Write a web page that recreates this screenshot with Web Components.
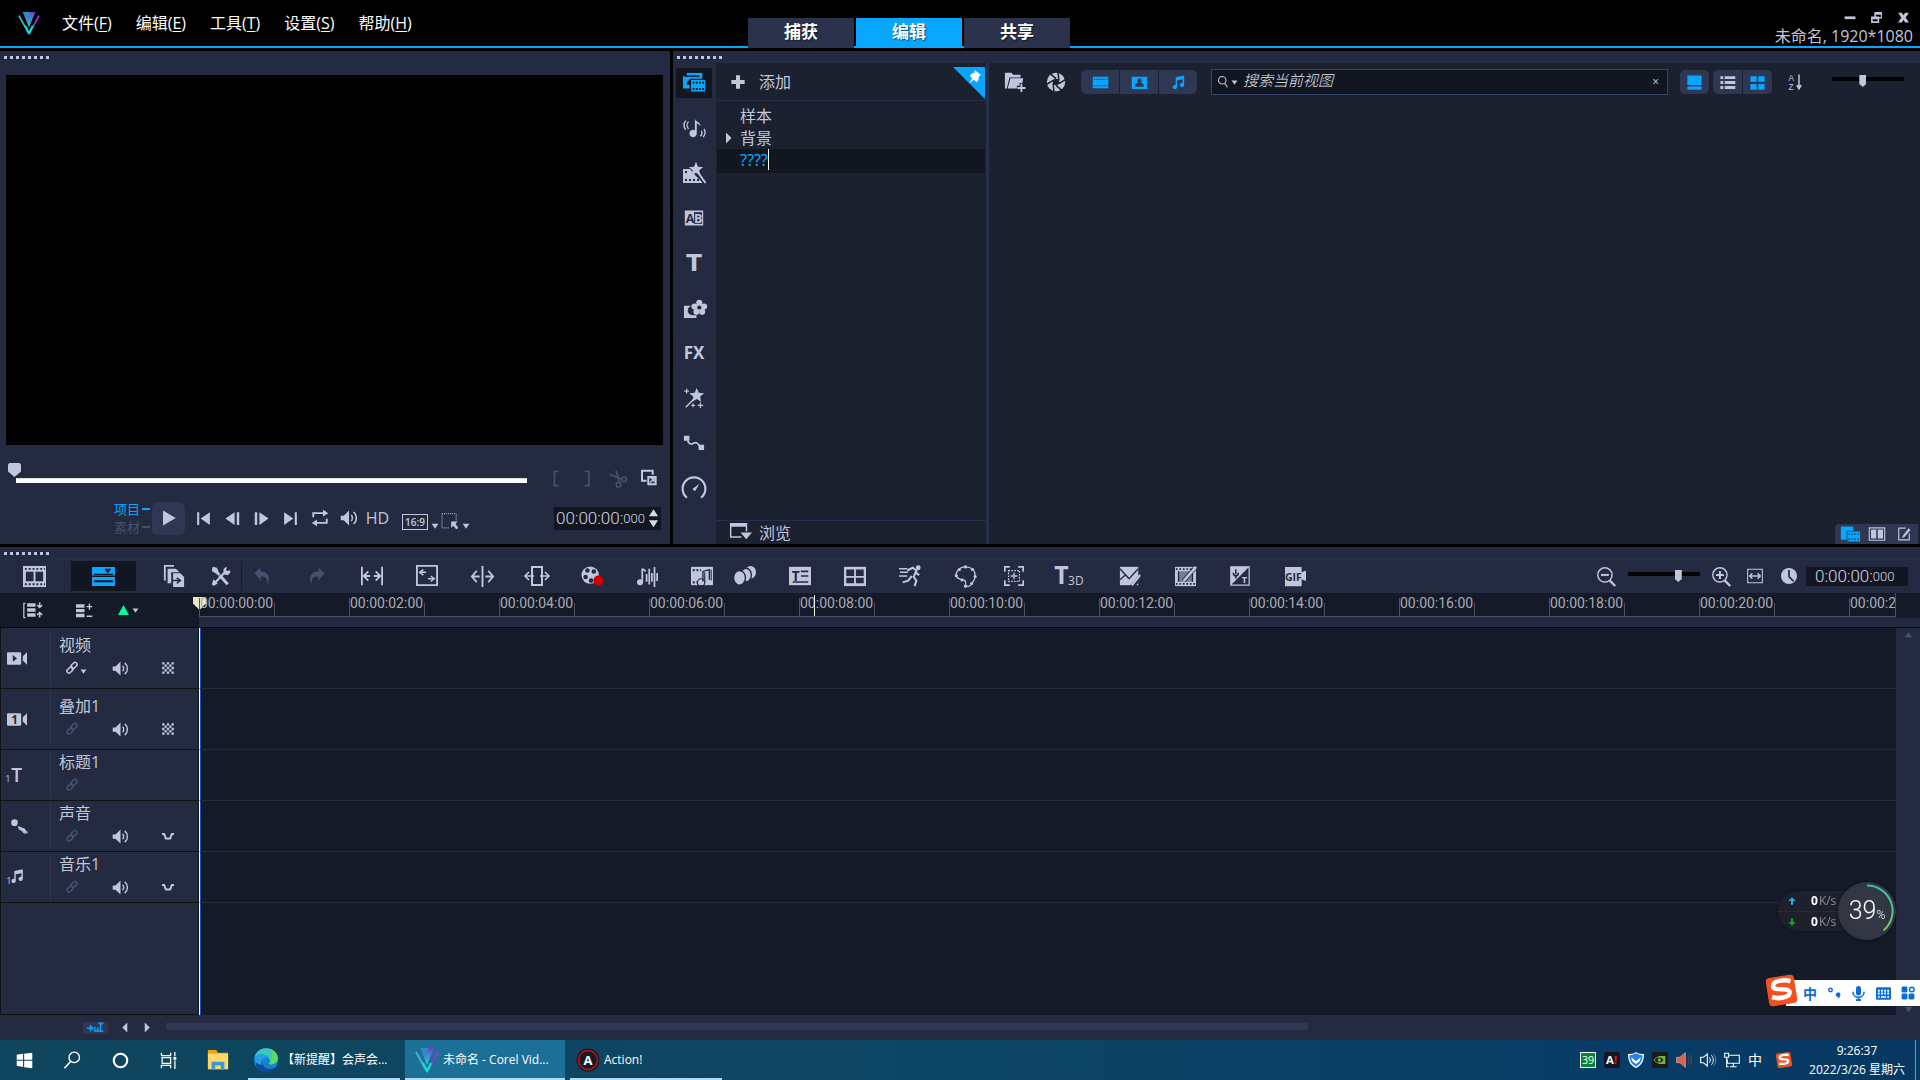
<!DOCTYPE html>
<html lang="zh-CN">
<head>
<meta charset="utf-8">
<title>未命名 - Corel VideoStudio</title>
<style>
  :root {
    --panel: #242b40; --deep: #1c2130; --well: #121621; --lane: #151a28;
    --chip: #2e3853; --ink: #c0c6db; --blue: #08a6ff; --dim: #45516f; --line: #25304f;
  }
  html, body { height: 100%; margin: 0; }
  body {
    background: #000; color: var(--ink); overflow: hidden;
    font: 16px/24px "Open Sans", "Noto Sans CJK SC", sans-serif;
  }
</style>
</head>
<body>
<studio-app></studio-app>
<script>
/* Icon artwork, each on a 24 by 24 grid, drawn in the current colour. */
const TXT = 'font-family="Open Sans, sans-serif" fill="currentColor"';
const STAR = 'M0-8 2.200-2.600 8-2.200 3.600 1.600 5 7.200 0 4.200-5 7.200-3.600 1.600-8-2.200-2.200-2.600z';
const NOTES = 'M8 4.500 20 2v13.500a3 3 0 1 1-2-2.800V7.500L10 9v9.500a3 3 0 1 1-2-2.800z';
const ICONS = {
  logo: `<defs><linearGradient id="a" x1="0" y1="0" x2="0" y2="1"><stop offset="0" stop-color="#c325d8"/><stop offset=".5" stop-color="#7a3fc4"/><stop offset="1" stop-color="#25c9c9"/></linearGradient><linearGradient id="b" x1="0" y1="0" x2="0" y2="1"><stop offset="0" stop-color="#7a3bc9"/><stop offset="1" stop-color="#10e0cf"/></linearGradient></defs>
    <path d="M5 0h14l-7 17z" fill="url(#b)"/><path d="M5 0h8l-1 10z" fill="#2a8fbd"/><path d="M1 4l10.500 19" stroke="#3fb6cf" stroke-width="2" fill="none"/><path d="M23 4 12.500 23" stroke="url(#a)" stroke-width="2" fill="none"/><path d="M8 15l4 8 4-8" stroke="#10dfd2" stroke-width="2" fill="none"/>`,
  min: `<path d="M3 10h20v5H3z"/>`,
  restore: `<path d="M8 2h14v12h-5v8H2V10h6zM11 7v3h6v1h3V7zM5 15v4h9v-4z" fill-rule="evenodd"/>`,
  close: `<path d="M2 3h7l3 5 3-5h7l-6 9 6 9h-7l-3-5-3 5H2l6-9z"/>`,
  media: `<path d="M4 1h17v8H4z"/><path d="M0 4h15v14H0z"/><path d="M1 4.500h17" stroke="#121621" stroke-width="1.500"/><path d="M4 12c2-4 5-4 6-1l-2 3H4z" fill="#121621"/><path d="M8 8h17v14H8z" stroke="#121621" stroke-width="1.500"/><path d="M10.500 11.500h13M10.500 18.500h13" stroke="#121621" stroke-width="2" stroke-dasharray="2 1.500"/>`,
  sound: `<path d="M13 2c1 4 6 3 6 8-2-3-4-3-4-3v11a4 4 0 1 1-2-3.500z"/><path d="M6 5a6 6 0 0 0 0 8M3 4a8 8 0 0 0 0 10M20 15a5 5 0 0 1-1 6M23 13a8 8 0 0 1-1 9" fill="none" stroke="currentColor" stroke-width="1.500"/>`,
  filmwand: `<path d="M1 8h7l5 6 7 7v1H1z"/><path d="M3 10h2v2H3zm0 8h2v2H3zm4 0h2v2H7zm4 0h2v2h-2zm4 0h2v2h-2z" fill="#242b40"/><path d="M15 10l9 11" stroke="#242b40" stroke-width="4"/><path d="M15 10l8.500 12" stroke="currentColor" stroke-width="2"/><g transform="translate(14 8) scale(.9)"><path d="${STAR}"/></g>`,
  ab: `<path d="M1 3h22v18H1z"/><path d="M12 5h9.500v14H12z" fill="#242b40"/><text x="2" y="17.500" font-size="15" font-weight="700" font-family="Open Sans" fill="#242b40">A</text><text x="12" y="17.500" font-size="15" font-weight="700" ${TXT}>B</text>`,
  tee: `<text x="12" y="21" text-anchor="middle" font-size="25" font-weight="700" font-family="DejaVu Sans, sans-serif">T</text>`,
  flower: `<path d="M1 9h8a5 5 0 0 0 2 10h3v3H1z"/><g transform="translate(17 11)"><circle cx="0" cy="-5" r="3.200"/><circle cx="5" cy="-1" r="3.200"/><circle cx="3" cy="4.500" r="3.200"/><circle cx="-3" cy="4.500" r="3.200"/><circle cx="-5" cy="-1" r="3.200"/><circle r="4"/><circle r="2.200" fill="#242b40"/></g>`,
  wand: `<g transform="translate(15 9)"><path d="${STAR}"/></g><path d="M13 12 3 22" stroke="currentColor" stroke-width="1.600"/><path d="M4 2v5M1.500 4.500h5M11 18v4M9 20h4M19 17v6M16 20h6" stroke="currentColor" stroke-width="1.300"/>`,
  path: `<path d="M1 4h6v5.500H1zM17 14h6v5.500h-6z"/><path d="M5 9c2 6 5 4 7 3s5 0 6 4" fill="none" stroke="currentColor" stroke-width="1.800"/>`,
  gauge: `<path d="M5.500 21a10.500 10.500 0 1 1 13 0" fill="none" stroke="currentColor" stroke-width="2"/><path d="M17 8l-4 7-2.500-2z"/>`,
  plus: `<path d="M9 2h6v7h7v6h-7v7H9v-7H2V9h7z"/>`,
  pin: `<path d="M0 0h24v24z" fill="#08a6ff"/><path d="M16 2l5 4-1.500 1-.5 3-1.500 1.500-2-2-3.500 3 2.500-4-2-2L14 5l2.500-1z" fill="#fff"/>`,
  browse: `<path d="M1 2h18v9h-1.500V6h-15v10H13v1.500H1z"/><path d="M12 12h12l-6 7z"/>`,
  folder: `<path d="M1 2h7l2 2h8v3H6L3 19H1z"/><path d="M7 8h14l-1 5h-3v3h-3v3H4z"/><path d="M19 14v9M14.500 18.500h9" stroke="currentColor" stroke-width="2"/>`,
  aperture: `<circle cx="12" cy="12" r="11"/><circle cx="12" cy="12" r="4" fill="#1c2130"/><path d="M12 8 5 2M15.500 10l-1-9M15.500 14l8-5M12 16l7 6M8.500 14l1 9M8.500 10l-8 5" stroke="#1c2130" stroke-width="1.800"/>`,
  film: `<path d="M1 4h22v16H1z"/><path d="M3 7.500h19M3 16.500h19" stroke="#2e3853" stroke-width="1.600" stroke-dasharray="1.500 1.500"/>`,
  photo: `<path d="M1 4h22v17H1z"/><path d="M12 6a3.500 3.500 0 0 1 2 6l4 2.500v3.500H6v-3.500l4-2.500A3.500 3.500 0 0 1 12 6z" fill="#2e3853"/>`,
  notes: `<path d="${NOTES}"/>`,
  mag: `<circle cx="9" cy="9" r="6.500" fill="none" stroke="currentColor" stroke-width="1.800"/><path d="M13 14l5 7" stroke="currentColor" stroke-width="2"/>`,
  big: `<path d="M3 3h18v12H3zM3 17h18v4H3z"/>`,
  list: `<path d="M2 3h4v4H2zm6 0h15v4H8zM2 10h4v4H2zm6 0h15v4H8zM2 17h4v4H2zm6 0h15v4H8z"/>`,
  grid: `<path d="M3 4h8v7H3zm10 0h8v7h-8zM3 14h8v7H3zm10 0h8v7h-8z"/>`,
  sort: `<text x="2" y="10" font-size="11" font-family="Liberation Sans, sans-serif">A</text><text x="2" y="23" font-size="11" font-family="Liberation Sans, sans-serif">Z</text><path d="M16 2v18M13 16l3 5 3-5" fill="none" stroke="currentColor" stroke-width="2"/>`,
  libstack: `<path d="M1 3h15v5H8v11H1z"/><path d="M9 9h15v12H9z"/><path d="M10 12h13M10 18h13" stroke="#2e3853" stroke-width="1.500" stroke-dasharray="2 1.500"/>`,
  dual: `<path d="M1 3h22v18H1zM2.500 4.500v15h19v-15z" fill-rule="evenodd"/><path d="M4 6h7v12H4zM13 6h7v12h-7z"/>`,
  edit: `<path d="M15 2H3v20h18V11" fill="none" stroke="currentColor" stroke-width="2"/><path d="M20 2l3 3L13 17l-4 2 1-4z"/>`,
  lbr: `<path d="M15 2H9v20h6" fill="none" stroke="currentColor" stroke-width="2.500"/>`,
  rbr: `<path d="M8 2h6v20H8" fill="none" stroke="currentColor" stroke-width="2.500"/>`,
  cut: `<path d="M9 2l4 14M1 7l16 6" stroke="currentColor" stroke-width="2.200"/><circle cx="19" cy="13" r="3" fill="none" stroke="currentColor" stroke-width="2"/><circle cx="12" cy="20" r="3" fill="none" stroke="currentColor" stroke-width="2"/>`,
  popout: `<path d="M7 16H0V1h16v6" fill="none" stroke="currentColor" stroke-width="3"/><path d="M8 9h14v14H8zM11 12v8h8v-8z" fill-rule="evenodd"/><path d="M12 19l6-6M13 13h5v5" stroke="currentColor" stroke-width="2" fill="none"/>`,
  play: `<path d="M4 2l17 10L4 22z"/>`,
  home: `<path d="M3 3h3v18H3zM21 3v18L8 12z"/>`,
  back: `<path d="M15 3v18L2 12zM18 3h3.500v18H18z"/>`,
  fwd: `<path d="M9 3v18l13-9zM2.500 3H6v18H2.500z"/>`,
  end: `<path d="M18 3h3v18h-3zM3 3v18l13-9z"/>`,
  loop: `<path d="M3 11V5.500h15M21 13v5.500H6" fill="none" stroke="currentColor" stroke-width="2.500"/><path d="M16 1l7 4.500-7 4.500zM8 14l-7 4.500L8 23z"/>`,
  vol: `<path d="M1 9h4l7-7v20l-7-7H1z"/><path d="M15 8c2 2 2 6 0 8M18 4c5 4 5 12 0 16" fill="none" stroke="currentColor" stroke-width="2"/>`,
  pick: `<path d="M0 1h20v11M0 1v20h10" fill="none" stroke="currentColor" stroke-width="1.400" stroke-dasharray="1.400 1.400"/><path d="M13 12h9l-3 3 4 6-3 2-4-5-3 3z"/>`,
  caret: `<path d="M2 5h20L12 20z"/>`, up: `<path d="M2 20h20L12 5z"/>`,
  left: `<path d="M16 1v22L5 12z"/>`, right: `<path d="M6 1v22l11-11z"/>`,
  peak: `<path d="M0 22h24L12 0z"/>`,
  story: `<path d="M0 1h24v22H0z"/><path d="M3 7h8v10H3zM13 7h8v10h-8z" fill="#242b40"/><path d="M2 4h21M2 20h21" stroke="#242b40" stroke-width="2" stroke-dasharray="2 2"/>`,
  tline: `<path d="M0 2h24v9H0zM0 12.500h24V22H0z"/><path d="M2 16h20v2H2zM2 9h20v1.500H2zM13 4h7l-3.500 5z" fill="#121621"/>`,
  copy: `<path d="M2 17V1h10" fill="none" stroke="currentColor" stroke-width="2"/><path d="M5 4h9l4 4H9v12H5z"/><path d="M11 9h8l4 4v11H11z"/><path d="M10 17h8m-3-3 4 3-4 3" stroke="#242b40" stroke-width="1.600" fill="none"/>`,
  tools: `<path d="M5 5l15 17" stroke="currentColor" stroke-width="3.500"/><path d="M18 6 4 21" stroke="currentColor" stroke-width="2.500"/><path d="M2 1l5 1 2 4-3 3-5-3zM15 4l3-3 1 1-1 3 2 1 3-1v3l-3 3-5-1z"/><path d="M3 16l5 5-5 3-2-2z"/><path d="M9 12l5-5" stroke="#242b40"/>`,
  undo: `<path d="M2 8l8-7v5c10 0 14 8 9 17 1-8-3-11-9-10v5z"/>`,
  redo: `<path d="M22 8l-8-7v5C4 6 0 14 5 23c-1-8 3-11 9-10v5z"/>`,
  fitw: `<path d="M1 2v20M23 2v20" stroke="currentColor" stroke-width="2"/><path d="M3 12h7M21 12h-7M8 7l-5 5 5 5M16 7l5 5-5 5" fill="none" stroke="currentColor" stroke-width="2"/>`,
  scale: `<path d="M1 1h22v21H1z" fill="none" stroke="currentColor" stroke-width="2"/><path d="M8 5 4 8l4 3M4 8h7M16 12l4 3-4 3M20 15h-7" fill="none" stroke="currentColor" stroke-width="1.600"/>`,
  split: `<path d="M12 1v22" stroke="currentColor" stroke-width="2"/><path d="M6 6l-5 6 5 6M1 12h8M18 6l5 6-5 6M23 12h-8" fill="none" stroke="currentColor" stroke-width="2"/>`,
  slip: `<path d="M7 3h10v18H7z" fill="none" stroke="currentColor" stroke-width="2"/><path d="M4 8l-4 4 4 4M0 12h9M20 8l4 4-4 4M24 12h-9" fill="none" stroke="currentColor" stroke-width="1.600"/>`,
  reel: `<circle cx="10" cy="11" r="9.500"/><g fill="#242b40"><circle cx="7" cy="6" r="2.500"/><circle cx="14" cy="7" r="2.500"/><circle cx="5" cy="13" r="2.500"/><circle cx="11" cy="17" r="2.500"/></g><circle cx="19" cy="17" r="5.500" fill="#d00000"/>`,
  mix: `<path d="M6 3v15M6 3l4 3" stroke="currentColor" stroke-width="2" fill="none"/><circle cx="3.500" cy="18.500" r="3.500"/><path d="M11 9v9M14 3v18M17 8v10M20 1v23M23 8v9" stroke="currentColor" stroke-width="2"/>`,
  autom: `<path d="M0 2h24v20H0z"/><path d="M2 5.500h9M2 19h5" stroke="#242b40" stroke-width="2.400" stroke-dasharray="2 2"/><path d="M13 18V7l7-2v11" fill="none" stroke="#242b40" stroke-width="1.500"/><path d="M15 8v11M22 5v12" stroke="#242b40" stroke-width="1.200"/><circle cx="11" cy="19" r="4" fill="none" stroke="#242b40" stroke-width="1.300"/>`,
  trail: `<ellipse cx="18" cy="8" rx="6" ry="7"/><g stroke="#242b40" stroke-width="1.500"><ellipse cx="13" cy="11" rx="6" ry="7.500"/><ellipse cx="6" cy="14" rx="6.500" ry="8"/></g>`,
  sub: `<path d="M0 2h24v20H0z"/><text x="3" y="17" font-size="15" font-weight="700" font-family="Open Sans" fill="#242b40">T</text><path d="M13 7h8M13 12h8M4 18.500h17" stroke="#242b40" stroke-width="1.800"/>`,
  quad: `<path d="M0 2h24v21H0z"/><path d="M2.500 5H11v7H2.500zM13 5h8.500v7H13zM2.500 14H11v6H2.500zM13 14h8.500v6H13z" fill="#242b40"/>`,
  run: `<circle cx="21" cy="3" r="2.600"/><path d="M9 6l6-3 4 3-3 7 3 4-2 6M14 12l-4 5-6 2M18 8l4 3" fill="none" stroke="currentColor" stroke-width="2.200"/><path d="M0 4h9M1 8h9M0 12h9" stroke="currentColor" stroke-width="1.600"/>`,
  mask: `<path d="M12 1c7 0 11 4 11 10 0 6-3 6-4 10-3 3-4 3-7 1 1-5-1-7-6-7-4-1-6-4-4-8 2-4 5-6 10-6z" fill="none" stroke="currentColor" stroke-width="1.500"/><g><circle cx="12" cy="1" r="1.800"/><circle cx="5" cy="4" r="1.800"/><circle cx="1.500" cy="11" r="1.800"/><circle cx="20" cy="4" r="1.800"/><circle cx="23" cy="12" r="1.800"/><circle cx="19" cy="20" r="1.800"/><circle cx="12" cy="23" r="1.800"/><circle cx="8" cy="16" r="1.800"/></g>`,
  track: `<path d="M1 7V1h6M17 1h6v6M23 17v6h-6M7 23H1v-6" fill="none" stroke="currentColor" stroke-width="2"/><path d="M5.500 5.500h13v13h-13z" fill="none" stroke="currentColor" stroke-width="1.500" stroke-dasharray="2 1.400"/><path d="M12 8v8M8 12h8" stroke="currentColor" stroke-width="1.600"/>`,
  t3d: `<text x="-4" y="21" font-size="27" font-weight="700" ${TXT}>T</text><text x="11" y="22" font-size="13" ${TXT}>3D</text>`,
  maskbox: `<path d="M1 2h20v20H1z"/><path d="M1 4l10 11L21 4M1 16l6-5" stroke="#242b40" stroke-width="1.500" fill="none"/><path d="M24 12 14 24" stroke="#242b40" stroke-width="5"/><path d="M23 11 14 22" stroke="currentColor" stroke-width="2.500"/>`,
  filmpen: `<path d="M0 1h24v22H0z"/><path d="M4 6h16v12H4z" fill="#747b92"/><path d="M1 3.500h22M1 20.500h22" stroke="#242b40" stroke-width="2" stroke-dasharray="2 2"/><path d="M4 6v12M20 8v10" stroke="#242b40" stroke-width="1.500"/><path d="M22 3 10 17" stroke="#242b40" stroke-width="5"/><path d="M24 1 10 17" stroke="currentColor" stroke-width="3"/>`,
  speech: `<path d="M1 1h22v22H1z" fill="none" stroke="currentColor" stroke-width="1.500"/><path d="M1 1h22L1 23z"/><path d="M7 4v6M4 8c0 5 6 5 6 0M7 12v3" stroke="#242b40" stroke-width="1.800" fill="none"/><text x="14" y="20" font-size="11" font-weight="700" ${TXT}>T</text>`,
  gif: `<path d="M0 1h19v6l5-2v12l-5-2v8H0z"/><text x="0" y="17" font-size="12" font-weight="700" font-family="Open Sans" fill="#242b40">GIF</text>`,
  zout: `<circle cx="10" cy="10" r="9" fill="none" stroke="currentColor" stroke-width="1.800"/><path d="M16 17l7 7" stroke="currentColor" stroke-width="3"/><path d="M5 10h10" stroke="currentColor" stroke-width="2.500"/>`,
  zin: `<circle cx="10" cy="10" r="9" fill="none" stroke="currentColor" stroke-width="1.800"/><path d="M16 17l7 7" stroke="currentColor" stroke-width="3"/><path d="M5 10h10M10 5v10" stroke="currentColor" stroke-width="2.500"/>`,
  fit: `<path d="M1 2h22v20H1z" fill="none" stroke="currentColor" stroke-width="1.600"/><path d="M8 8l-4 4 4 4M16 8l4 4-4 4M4 12h16" fill="none" stroke="currentColor" stroke-width="2"/>`,
  clock: `<circle cx="12" cy="12" r="12"/><path d="M12 3v10l7 7" stroke="#242b40" stroke-width="2.500" fill="none"/>`,
  tracks: `<path d="M3 4H1v17h2" fill="none" stroke="currentColor" stroke-width="1.500"/><path d="M5 4h10v4H5zm0 6h10v4H5zM5 16h10v4H5z"/><path d="M20 3v6M20 15v6M17 6l3 3 3-3M17 18l3-3 3 3" stroke="currentColor" stroke-width="1.800" fill="none"/>`,
  addtrk: `<path d="M0 3h12v5H0zm0 7h12v4.500H0zM0 16.500h12v5H0z"/><path d="M19 2v9M15 6.500h8M15 20h8" stroke="currentColor" stroke-width="2"/>`,
  cam: `<rect y="5" width="17" height="15" rx="1"/><path d="M19 10l5-5v15l-5-5z"/><path d="M7 8.500l5 4-5 4z" fill="#242b40"/>`,
  cam1: `<rect y="5" width="17" height="15" rx="1"/><path d="M19 10l5-5v15l-5-5z"/><text x="5" y="17.500" font-size="14" font-weight="700" font-family="Open Sans" fill="#242b40">1</text>`,
  title1: `<text x="-2" y="20" font-size="11" ${TXT}>1</text><text x="5" y="20" font-size="23" font-weight="600" ${TXT}>T</text>`,
  mic: `<circle cx="9" cy="8" r="4"/><path d="M13 12l8 3 3 4-3 1-7-4z"/><path d="M19 19c3 3 5 1 6 0" stroke="currentColor" stroke-width="1.300" fill="none"/>`,
  music1: `<text x="-1" y="20" font-size="11" ${TXT}>1</text><g transform="translate(2 1) scale(.85)"><path d="${NOTES}"/></g>`,
  link: `<g fill="none" stroke="currentColor" stroke-width="3"><rect x="9" y="3" width="14" height="8" rx="4" transform="rotate(-45 16 7)"/><rect x="1" y="12" width="14" height="8" rx="4" transform="rotate(-45 8 16)"/></g>`,
  mesh: `<path d="M2 2h4v4H2zm8 0h4v4h-4zm8 0h4v4h-4zM6 6h4v4H6zm8 0h4v4h-4zM2 10h4v4H2zm8 0h4v4h-4zm8 0h4v4h-4zM6 14h4v4H6zm8 0h4v4h-4zM2 18h4v4H2zm8 0h4v4h-4zm8 0h4v4h-4z"/>`,
  duck: `<path d="M0 8h4.500l3 9h9l3-9H24" fill="none" stroke="currentColor" stroke-width="4" stroke-linejoin="round"/>`,
  follow: `<path d="M0 13h7M4 9l4 4-4 4M10 17h13M11 17v-6M15 17v-5M19 17V9" fill="none" stroke="currentColor" stroke-width="2"/><path d="M15 5h9l-4.500 5z"/>`,
  win: `<path d="M1 4l9-1.500V11H1zM11.500 2.500 23 1v10H11.500zM1 12.500h9V21l-9-1.500zM11.500 12.500H23V23l-11.500-1.500z"/>`,
  find: `<circle cx="15" cy="8.500" r="7" fill="none" stroke="currentColor" stroke-width="1.800"/><path d="M10 14l-8 9" stroke="currentColor" stroke-width="2"/>`,
  ring: `<circle cx="12" cy="12" r="9.500" fill="none" stroke="currentColor" stroke-width="3"/>`,
  tview: `<path d="M2 1v4h13V1M3 8h12v8H3zM2 23v-4h13v4M21 0v6M21 12v12" fill="none" stroke="currentColor" stroke-width="1.800"/><path d="M19 7h4v4h-4z"/>`,
  explorer: `<path d="M1 1h9l2 3h11v18H1z" fill="#f0a30c"/><path d="M1 5h22v17H1z" fill="#ffd869"/><path d="M5 23v-9h14v9h-4v-5H9v5z" fill="#3b97dc"/>`,
  edge: `<circle cx="12" cy="12" r="12" fill="#1583d2"/><path d="M1 8C4-2 20-3 24 9c1 6-5 8-9 7 3-4-1-8-6-8-4 0-7 2-8 4z" fill="#39c8ba"/><path d="M17 1c6 3 8 8 6 12-2 3-6 4-8 3 3-6 4-9 2-15z" fill="#61d768"/><path d="M8 12c0 9 8 11 14 7-5 8-17 7-20-1 0-4 3-6 6-6z" fill="#0c4b9c"/><path d="M1 9c3-4 11-4 14 1-4-2-9 1-7 7-5-1-8-4-7-8z" fill="#249ee2"/>`,
  action: `<circle cx="12" cy="12" r="11.500" fill="#191a21"/><circle cx="12" cy="12" r="9.500" fill="none" stroke="#c50c26" stroke-width="1.500"/><text x="12" y="16.500" text-anchor="middle" font-size="13" font-weight="700" font-family="Open Sans, sans-serif" fill="#fff">A</text>`,
  t39: `<path d="M.75.75h22.500v22.500H.75z" fill="#07833a" stroke="#fff" stroke-width="1.500"/><text x="12" y="18" text-anchor="middle" font-size="16" font-family="Open Sans" fill="#fff">39</text>`,
  tact: `<rect width="24" height="24" rx="4" fill="#15161d"/><text x="3" y="18" font-size="17" font-weight="700" font-family="Open Sans, sans-serif" fill="#fff">A<tspan fill="#f01026">!</tspan></text>`,
  shield: `<path d="M12 0c4 3 8 3 12 3 0 10-3 17-12 21C3 20 0 13 0 3c4 0 8 0 12-3z" fill="#fff"/><path d="M12 2c4 2 7 3 10 3 0 8-3 13-10 17C5 18 2 13 2 5c3 0 6-1 10-3z" fill="#2582ed"/><path d="M5 8l7 6 7-6-1 5-6 5-6-5z" fill="#fff"/>`,
  nv: `<path d="M0 0h24v24H0z" fill="#1b1b1b"/><path d="M10 6h10v12H10z" fill="#75b43e"/><path d="M3 12c4-6 11-6 15 0-4 6-11 6-15 0z" fill="#1b1b1b" stroke="#75b43e" stroke-width="1.500"/><circle cx="11" cy="12" r="2.500" fill="#75b43e"/>`,
  redvol: `<path d="M1 8h5l8-7v22l-8-7H1z" fill="#dc6045" stroke="#efb79f"/><path d="M18 7c2 3 2 7 0 10M21 4c3 5 3 11 0 16" fill="none" stroke="#4a4348" stroke-width="2"/>`,
  tvol: `<path d="M1 8h4l6-5v18l-6-5H1z" fill="none" stroke="#fff" stroke-width="1.600"/><path d="M14 8c2 2 2 6 0 8M17 5c4 4 4 10 0 14" fill="none" stroke="#fff" stroke-width="1.500"/><path d="M20 3c5 5 5 13 0 18" fill="none" stroke="#6f8fae" stroke-width="1.500"/>`,
  net: `<path d="M8 5h15v12H5v-6M14 17v5M9 22h10M1 2h6v6H1zM4 8v14h3" fill="none" stroke="#fff" stroke-width="1.600"/>`,
  sogou: `<g transform="rotate(-9 12 12)"><rect x="1" y="1" width="22" height="22" rx="3" fill="#f4501e"/><path d="M20 6c-4-2-14-3-14 2 0 4 12 2 12 6 0 5-10 4-14 2" fill="none" stroke="#fff" stroke-width="3.500"/></g>`,
  punct: `<circle cx="6" cy="7" r="3" fill="none" stroke="currentColor" stroke-width="2.500"/><path d="M17 12a3.500 3.500 0 0 1 6 2c0 5-3 7-6 8 2-2 2-3 2-4a3 3 0 0 1-2-6z"/>`,
  bmic: `<rect x="8" y="0" width="8" height="15" rx="4"/><path d="M3 9c0 12 18 12 18 0M12 18v5" fill="none" stroke="currentColor" stroke-width="2.500"/><path d="M8 21h8v3H8z"/>`,
  kbd: `<rect y="2" width="24" height="20" rx="2"/><path d="M3 7.500h18M3 12h18" stroke="#fff" stroke-width="3" stroke-dasharray="3 2"/><path d="M3 17.500h3M8 17.500h8M18 17.500h3" stroke="#fff" stroke-width="2.500"/>`,
  apps: `<rect x="1" y="1" width="10" height="10" rx="2"/><circle cx="18.500" cy="6" r="4" fill="none" stroke="currentColor" stroke-width="2.500"/><rect x="1" y="13" width="10" height="10" rx="2"/><rect x="13" y="13" width="10" height="10" rx="2"/>`,
  uparr: `<path d="M12 1l11 11h-8v11H9V12H1z"/>`, dnarr: `<path d="M12 23l11-11h-8V1H9v11H1z"/>`
};

const BASE = `
  *, *::before, *::after { box-sizing: border-box; }
  :host { display: block; }
  button, input { font: inherit; color: inherit; background: none; border: 0; padding: 0; margin: 0; outline: 0; }
  button { display: inline-flex; align-items: center; justify-content: center; }
  input { min-width: 0; }
  input[type=range] { appearance: none; -webkit-appearance: none; display: block; }
  .slim { height: 12px; width: 72px; background: linear-gradient(#000, #000) 0 2px / 100% 4px no-repeat; }
  .slim::-webkit-slider-thumb { -webkit-appearance: none; width: 7px; height: 12px; background: var(--ink); clip-path: polygon(0 0,100% 0,100% 75%,50% 100%,0 75%); }
`;
const define = (name, css, html) => customElements.define(name, class extends HTMLElement {
  constructor() {
    super();
    const t = document.createElement('template');
    t.innerHTML = `<style>${BASE}${css}</style>${typeof html === 'function' ? html(this) : html}`;
    this.attachShadow({ mode: 'open' }).append(t.content.cloneNode(true));
  }
});
const ic = (name, size = 20) => `<vs-icon name="${name}" style="--s:${size}px"></vs-icon>`;
const btn = (name, label, size, cls = '') => `<button type="button" class="${cls}" aria-label="${label}">${ic(name, size)}</button>`;

class VsIcon extends HTMLElement {
  connectedCallback() {
    if (this.shadowRoot) return;
    this.attachShadow({ mode: 'open' }).innerHTML =
      `<style>:host{display:inline-block;flex:none;width:var(--s);height:var(--s)}svg{display:block;overflow:visible;width:100%;height:100%}</style>
       <svg viewBox="0 0 24 24" fill="currentColor" aria-hidden="true">${ICONS[this.getAttribute('name')]}</svg>`;
  }
}
customElements.define('vs-icon', VsIcon);

define('drag-grip', `
  :host { height: 12px; padding: 5px 0 0 4px; }
  i { display: block; width: 46px; height: 3px; background: repeating-linear-gradient(90deg, var(--ink) 0 3px, transparent 3px 6px); }
`, '<i></i>');

/* Title bar: logo, menus, workspace tabs, window buttons. */
define('title-bar', `
  :host { display: grid; grid-template-columns: minmax(0, 748fr) auto minmax(0, 850fr); height: 48px; border-bottom: 2px solid var(--blue); background: #000; }
  nav { display: flex; align-items: center; padding: 0 0 2px 18px; color: #fff; }
  nav button { margin-left: 24px; white-space: nowrap; }
  nav vs-icon + button { margin-left: 22px; }
  u { text-underline-offset: 2px; }
  .tabs { display: flex; gap: 2px; align-items: flex-end; }
  .tabs button { width: 106px; height: 30px; padding-bottom: 2px; background: #2a334b; color: #fff; font-weight: 700; font-size: 17px; text-shadow: 1px 1px 1px #0008; }
  .tabs .on { background: var(--blue); }
  .right { display: flex; flex-direction: column; align-items: flex-end; padding: 10px 7px 0 0; }
  .win { display: flex; gap: 14px; padding-right: 3px; height: 14px; }
  .right p { margin: 0; line-height: 24px; }
`, `<nav>${ic('logo', 22)}
  ${[['文件', 'F'], ['编辑', 'E'], ['工具', 'T'], ['设置', 'S'], ['帮助', 'H']].map(([a, k]) => `<button type="button"><span>${a}(<u>${k}</u>)</span></button>`).join('')}
  </nav>
  <div class="tabs"><button type="button">捕获</button><button type="button" class="on">编辑</button><button type="button">共享</button></div>
  <div class="right"><div class="win">${btn('min', '最小化', 13)}${btn('restore', '还原', 13)}${btn('close', '关闭', 13)}</div><p>未命名, 1920*1080</p></div>`);

define('time-code', `
  :host { display: flex; align-items: center; background: var(--well); font: 300 17px/18px Roboto, sans-serif; color: #d5d9e6; }
  small { font-size: 13px; padding-top: 2px; }
`, '<span><slot></slot></span><small><slot name="ms"></slot></small><slot name="spin"></slot>');

/* Preview player. */
define('preview-panel', `
  :host { display: flex; flex-direction: column; background: var(--panel); }
  .video { flex: 1; margin: 12px 7px 0 6px; background: #000; }
  .scrub { display: flex; align-items: center; padding: 14px 5px 0 8px; height: 42px; }
  .scrub input { flex: 1; height: 20px; margin-right: 14px; background: linear-gradient(#ddd 0 1px, #fff 1px) 8px 100% / 100% 5px no-repeat; }
  .scrub input::-webkit-slider-thumb { -webkit-appearance: none; width: 13px; height: 14px; margin-bottom: 6px; background: var(--ink); clip-path: polygon(0 10%,10% 0,90% 0,100% 10%,100% 60%,50% 100%,0 60%); }
  .scrub button { width: 31px; color: var(--dim); margin-top: 10px; }
  .scrub button:last-child { color: var(--ink); }
  .bar { display: flex; align-items: center; height: 57px; padding: 10px 9px 5px 114px; }
  .mode { display: flex; flex-direction: column; width: 38px; font-size: 13px; padding-bottom: 1px; }
  .mode button { height: 18px; line-height: 18px; justify-content: flex-start; color: var(--dim); }
  .mode button::after { content: ""; width: 8px; height: 2px; margin-left: 2px; background: currentColor; }
  .mode .on { color: var(--blue); }
  .play { width: 33px; height: 33px; border-radius: 6px; background: var(--chip); margin-right: 4px; }
  .t { width: 29px; }
  .drops { display: flex; align-items: flex-end; gap: 3px; padding: 6px 0 0 10px; }
  .ratio { border: 1px solid var(--ink); width: 26px; height: 16px; font-size: 10px; line-height: 14px; font-weight: 600; }
  time-code { margin-left: auto; height: 23px; padding-left: 2px; width: 107px; }
  .spin { margin-left: auto; display: flex; flex-direction: column; padding-right: 2px; }
`, `<drag-grip></drag-grip><div class="video"></div>
  <div class="scrub"><input type="range" value="0" aria-label="预览位置">${btn('lbr', '开始标记', 17)}${btn('rbr', '结束标记', 17)}${btn('cut', '分割', 19)}${btn('popout', '扩大', 16)}</div>
  <div class="bar"><div class="mode"><button type="button" class="on">项目</button><button type="button">素材</button></div>
  ${btn('play', '播放', 18, 'play')}${btn('home', '起始', 17, 't')}${btn('back', '上一帧', 17, 't')}${btn('fwd', '下一帧', 17, 't')}${btn('end', '结束', 17, 't')}${btn('loop', '重复', 18, 't')}${btn('vol', '音量', 18, 't')}<button type="button" class="t">HD</button>
  <div class="drops"><button type="button" class="ratio">16:9</button>${ic('caret', 8)}${btn('pick', '变形工具', 17)}${ic('caret', 8)}</div>
  <time-code>00:00:00:<span slot="ms">000</span><span slot="spin" class="spin">${ic('up', 11)}${ic('caret', 11)}</span></time-code></div>`);

/* Library: category rail, folder tree, gallery. */
define('library-panel', `
  :host { display: flex; flex-direction: column; background: var(--panel); min-width: 0; }
  .body { flex: 1; display: flex; min-height: 0; }
  .rail { width: 43px; padding: 5px 0 0 3px; display: flex; flex-direction: column; gap: 15px; }
  .rail button { width: 36px; height: 30px; }
  .rail .on { background: var(--well); color: var(--blue); }
  .rail .fx { font: 700 17px/30px "Liberation Sans Narrow", "Noto Sans", sans-serif; }
  .tree { width: 270px; background: var(--deep); display: flex; flex-direction: column; }
  .add { height: 38px; display: flex; align-items: center; padding-left: 14px; border-bottom: 1px solid var(--line); }
  .add > button { gap: 13px; }
  .add .pin { margin: 0 1px 0 auto; align-self: flex-start; padding-top: 4px; }
  ul { list-style: none; margin: 4px 1px 0; padding: 0; flex: 1; }
  li { height: 22px; display: flex; align-items: center; padding-left: 23px; }
  li.fold { padding-left: 6px; gap: 5px; }
  li.sel { height: 24px; background: var(--well); color: var(--blue); font: 16px/20px "Noto Sans", sans-serif; }
  li input { width: 28px; height: 21px; padding-bottom: 2px; }
  li.sel i { width: 1px; height: 21px; background: #fff; align-self: flex-start; }
  .browse { height: 24px; border-top: 1px solid var(--line); padding: 0 0 0 13px; }
  .browse button { gap: 7px; height: 23px; }
  .main { flex: 1; min-width: 0; display: flex; flex-direction: column; border-left: 3px solid var(--line); background: var(--deep); justify-content: space-between; }
  .tools { display: flex; align-items: flex-start; padding: 6px 16px 0 15px; height: 40px; }
  .tools > button { height: 26px; }
  .ap { margin: 0 15px 0 20px; }
  .grp { display: flex; gap: 1px; border-radius: 5px; overflow: hidden; margin-top: 1px; }
  .grp button { background: var(--chip); height: 24px; width: 38px; color: var(--blue); }
  .view button { width: 29px; }
  .view + .view { margin-left: 4px; }
  .view .off { color: var(--ink); }
  .find { flex: 1; display: flex; align-items: center; height: 26px; border: 1px solid #36436b; background: var(--well); margin: 0 12px 0 14px; padding: 0 8px 0 5px; }
  .find input { flex: 1; height: 24px; margin-left: 5px; padding-bottom: 4px; font-style: italic; font-weight: 300; font-size: 15px; }
  .find input::placeholder { color: #e4e7f0; opacity: 1; }
  .find button { font-size: 12px; }
  .sort { margin: 0 27px 0 15px; }
  .tools .slim { margin-top: 6px; }
  .corner { align-self: flex-end; display: flex; gap: 6px; height: 20px; margin-right: 2px; padding: 0 4px; background: var(--chip); border-radius: 4px 0 0 0; }
  .corner button { width: 21px; }
  .corner .on { color: var(--blue); }
`, `<drag-grip></drag-grip><div class="body">
  <nav class="rail">${btn('media', '媒体', 22, 'on')}${btn('sound', '声音', 22)}${btn('filmwand', '模板', 24)}${btn('ab', '转场', 20)}${btn('tee', '标题', 22)}${btn('flower', '覆叠', 23)}<button type="button" class="fx">FX</button>${btn('wand', '滤镜', 22)}${btn('path', '路径', 22)}${btn('gauge', '速度', 26)}</nav>
  <div class="tree"><div class="add"><button type="button">${ic('plus', 16)}<span>添加</span></button><button type="button" class="pin" aria-label="固定">${ic('pin', 32)}</button></div>
    <ul><li>样本</li><li class="fold">${ic('right', 12)}背景</li><li class="sel"><input type="text" value="????" aria-label="文件夹名称"><i></i></li></ul>
    <div class="browse"><button type="button">${ic('browse', 23)}<span>浏览</span></button></div></div>
  <div class="main"><div class="tools">${btn('folder', '导入', 22)}${btn('aperture', '捕获', 20, 'ap')}
    <div class="grp">${btn('film', '视频', 17)}${btn('photo', '图片', 17)}${btn('notes', '音频', 17)}</div>
    <div class="find">${ic('mag', 14)}${ic('caret', 7)}<input type="text" placeholder="搜索当前视图" aria-label="搜索"><button type="button">×</button></div>
    <div class="grp view">${btn('big', '大图', 19)}</div><div class="grp view">${btn('list', '列表', 17, 'off')}${btn('grid', '缩略图', 19)}</div>
    ${btn('sort', '排序', 18, 'sort')}<input type="range" class="slim" value="42" aria-label="缩略图大小"></div>
    <div class="corner">${btn('libstack', '素材库', 20, 'on')}${btn('dual', '双窗口', 18)}${btn('edit', '选项', 14)}</div></div></div>`);

/* Ruler marks are 75px per second; the last section ends at the window edge. */
define('time-ruler', `
  :host { display: flex; height: 24px; overflow: hidden; border-bottom: 1px solid #4b5168; border-right: 1px solid #4b5168; position: relative; color: #a9acb5; font: 14px/16px Roboto, sans-serif; }
  div { flex: 0 0 150px; display: flex; align-items: flex-end; }
  div:last-of-type { flex: 1 1 0; min-width: 0; }
  span, i { width: 75px; border-left: 1px solid #4b5168; white-space: nowrap; }
  div:last-of-type span { width: auto; }
  span { height: 18px; padding-bottom: 2px; line-height: 10px; }
  i { height: 13px; }
  b { position: absolute; left: 615px; top: 2px; width: 1px; height: 22px; background: #f2efdd; }
`, Array.from({ length: 11 }, (_, n) => `<div><span>00:00:${String(n * 2).padStart(2, '0')}:00</span><i></i></div>`).join('') + '<div><span>00:00:2</span></div><b></b>');

/* One timeline track: header and lane. Attributes: icon, tall, link, tools. */
define('timeline-track', `
  :host { display: grid; grid-template-columns: 199px 1fr; height: 51px; }
  :host([tall]) { height: 61px; }
  .head { display: flex; background: var(--panel); border: solid #101216; border-width: 0 1px 1px 1px; }
  .kind { width: 50px; border-right: 1px solid #2e3853; display: flex; align-items: center; padding-left: 6px; margin: 2px 0; }
  .info { padding: 0 0 0 8px; }
  :host([tall]) .info { padding-top: 5px; }
  .row { display: flex; height: 22px; align-items: center; }
  .row button { width: 29px; margin-right: 18px; }
  .row button:first-child { width: 26px; margin-right: 21px; padding-left: 7px; justify-content: flex-start; }
  .row .off { color: var(--dim); }
  .row button + button + button { margin: 0; }
  .row button:first-child vs-icon + vs-icon { margin: 6px 0 0 2px; }
  .lane { background: var(--lane); border-left: 1px solid #fffdf0; border-bottom: 1px solid var(--panel); box-shadow: inset 1px 0 #1d4fc4; }
`, el => {
  const link = el.getAttribute('link') === 'on';
  const third = el.getAttribute('tools');
  return `<div class="head"><div class="kind">${ic(el.getAttribute('icon'), 20)}</div><div class="info"><slot></slot>
    <div class="row"><button type="button" aria-label="链接" class="${link ? '' : 'off'}">${ic('link', 12)}${link ? ic('caret', 7) : ''}</button>
    ${third ? btn('vol', '静音', 17) + btn(third, '选项', third === 'mesh' ? 14 : 12) : ''}</div></div></div><div class="lane"></div>`;
});

define('timeline-panel', `
  :host { display: flex; flex-direction: column; background: var(--panel); min-width: 0; min-height: 0; }
  .bar { display: flex; align-items: flex-start; height: 34px; border-top: 1px solid var(--line); padding: 1px 12px 0 0; }
  .mode { width: 65px; height: 30px; }
  .mode.first { margin: 0 4px 0 2px; }
  .mode.on { background: var(--well); color: var(--blue); }
  .g { display: flex; gap: 15px; }
  .g button { width: 40px; height: 30px; }
  .a { margin-left: 18px; gap: 7px; padding-right: 2px; }
  .b { margin-left: -2px; border-left: 1px solid #181c28; } .b button:nth-child(-n+2) { color: var(--dim); }
  .c { margin-left: 3px; } .d { margin-left: 9px; } .e { margin-left: 21px; }
  .zoom { margin-left: auto; display: flex; align-items: center; height: 30px; }
  .zoom .slim { margin: 0 12px 0 12px; }
  .zoom button + button { margin-left: 18px; }
  .zoom input + button + button { margin-left: 16px; }
  time-code { height: 19px; width: 102px; margin-left: 9px; padding-left: 9px; }
  .top { display: grid; grid-template-columns: 199px 1fr 24px; height: 35px; background: var(--lane); border-bottom: 1px solid #080a10; }
  .corner { display: flex; align-items: center; padding-left: 23px; }
  .corner button + button { margin-left: 33px; }
  .corner .tri { color: #0f9; margin-left: 25px; margin-right: 3px; }
  .rul { display: flex; flex-direction: column; position: relative; min-width: 0; }
  .rul::after { content: ""; flex: 1; background: var(--panel); }
  .head { position: absolute; left: -6px; top: 4px; width: 13px; height: 13px; background: #ece5c8; clip-path: polygon(0 0,100% 0,100% 50%,50% 100%,0 50%); }
  .gap { background: linear-gradient(var(--lane) 25px, var(--panel) 25px); }
  .body { flex: 1; display: grid; grid-template-columns: 1fr 24px; min-height: 0; }
  .tracks { display: flex; flex-direction: column; }
  .rest { flex: 1; display: grid; grid-template-columns: 199px 1fr; }
  .rest i { background: var(--panel); border: solid #101216; border-width: 0 1px 1px 1px; }
  .rest b { background: var(--lane); border-left: 1px solid #fffdf0; box-shadow: inset 1px 0 #1d4fc4; }
  .vs { display: flex; flex-direction: column; justify-content: space-between; align-items: center; padding: 2px 0 1px; color: var(--dim); }
  .foot { height: 25px; display: flex; align-items: center; padding-left: 83px; }
  .foot .f { width: 25px; height: 12px; border-radius: 3px; background: var(--chip); color: var(--blue); margin-right: 6px; }
  .foot .n { width: 22px; }
  .foot i { flex: 0 1 1142px; height: 7px; background: var(--chip); margin: 0 0 3px 8px; }
`, `<drag-grip></drag-grip>
  <div class="bar">${btn('story', '故事板视图', 23, 'mode first')}${btn('tline', '时间轴视图', 23, 'mode on')}
  <div class="g a">${btn('copy', '复制属性', 22)}${btn('tools', '工具', 20)}</div>
  <div class="g b">${[['undo', 18], ['redo', 18], ['fitw', 22], ['scale', 22], ['split', 23], ['slip', 24], ['reel', 22], ['mix', 21], ['autom', 22]].map(([n, s]) => btn(n, n, s)).join('')}</div>
  <div class="g c">${[['trail', 22], ['sub', 22], ['quad', 22], ['run', 22], ['mask', 21]].map(([n, s]) => btn(n, n, s)).join('')}</div>
  <div class="g d">${btn('track', 'track', 20)}${btn('t3d', '3D', 22)}</div>
  <div class="g e">${[['maskbox', 22], ['filmpen', 21], ['speech', 20], ['gif', 21]].map(([n, s]) => btn(n, n, s)).join('')}</div>
  <div class="zoom">${btn('zout', '缩小', 19)}<input type="range" class="slim" value="72" aria-label="缩放">${btn('zin', '放大', 19)}${btn('fit', '适合窗口', 16)}${btn('clock', '时长', 16)}<time-code>0:00:00:<span slot="ms">000</span></time-code></div></div>
  <div class="top"><div class="corner">${btn('tracks', '显示全部轨道', 20)}${btn('addtrk', '轨道管理器', 17)}<button type="button" class="tri" aria-label="章节">${ic('peak', 11)}</button>${ic('caret', 7)}</div>
    <div class="rul"><i class="head"></i><time-ruler></time-ruler></div><div class="gap"></div></div>
  <div class="body"><div class="tracks">
    <timeline-track tall icon="cam" link="on" tools="mesh">视频</timeline-track>
    <timeline-track tall icon="cam1" tools="mesh">叠加1</timeline-track>
    <timeline-track icon="title1">标题1</timeline-track>
    <timeline-track icon="mic" tools="duck">声音</timeline-track>
    <timeline-track icon="music1" tools="duck">音乐1</timeline-track>
    <div class="rest"><i></i><b></b></div></div>
    <div class="vs">${ic('up', 9)}${ic('caret', 9)}</div></div>
  <div class="foot">${btn('follow', '启用滚动', 17, 'f')}${btn('left', '向左', 11, 'n')}${btn('right', '向右', 11, 'n')}<i></i></div>`);

define('task-bar', `
  :host { display: flex; height: 40px; color: #fff; font-size: 12px; background: linear-gradient(90deg, #0f455c, #0d4664 45%, #083c66 85%, #063861); }
  .q { width: 48px; } .ex { width: 52px; margin-right: 4px; }
  .app { justify-content: flex-start; gap: 4px; padding: 2px 0 0 6px; width: 152px; border-bottom: 2px solid #a9dcf7; white-space: nowrap; margin-right: 5px; }
  .app.on { width: 160px; background: #1c6f96; padding-left: 10px; }
  .tray { margin-left: auto; display: flex; align-items: center; gap: 8px; }
  .tray span { width: 16px; font-size: 14px; }
  .time { text-align: center; line-height: 19px; margin: 0 10px 0 9px; }
  .tray vs-icon:last-of-type { margin-left: 4px; }
  .end { width: 5px; border-left: 1px solid #6f93b0; align-self: stretch; margin-left: -8px; }
`, `${btn('win', '开始', 17, 'q')}${btn('find', '搜索', 18, 'q')}${btn('ring', 'Cortana', 17, 'q')}${btn('tview', '任务视图', 17, 'q')}${btn('explorer', '文件资源管理器', 22, 'ex')}
  <button type="button" class="app">${ic('edge', 24)}【新提醒】会声会...</button><button type="button" class="app on">${ic('logo', 24)}未命名 - Corel Vid...</button><button type="button" class="app">${ic('action', 24)}Action!</button>
  <div class="tray">${['t39', 'tact', 'shield', 'nv', 'redvol', 'tvol', 'net'].map(n => ic(n, 16)).join('')}<span>中</span>${ic('sogou', 16)}<div class="time">9:26:37<br>2022/3/26 星期六</div><i class="end"></i></div>`);

/* Floating network meter over the timeline. */
define('speed-meter', `
  :host { position: fixed; right: 24px; bottom: 140px; display: flex; align-items: center; }
  .pill { width: 89px; height: 40px; margin-right: -29px; border-radius: 20px 0 0 20px; background: #1d212c; box-shadow: 0 0 2px #0008; font-size: 12px; line-height: 20px; color: #8b8e98; }
  .pill p { margin: 0; display: flex; align-items: center; padding-left: 10px; height: 20px; }
  .pill p + p { border-top: 1px solid #282d39; }
  .pill b { color: #fff; margin-left: 15px; padding-right: 1px; }
  .up { color: #31a8ea; } .down { color: #1da02b; }
  .disc { position: relative; width: 58px; height: 58px; border-radius: 50%; background: radial-gradient(#363a49, #30343f); box-shadow: 0 0 3px #000a; color: #fff; display: flex; align-items: baseline; justify-content: center; font: 300 25px/58px Roboto, sans-serif; }
  small { font-size: 12px; }
  svg { position: absolute; inset: 0; }
`, `<div class="pill"><p><vs-icon class="up" name="uparr" style="--s:8px"></vs-icon><b>0</b>K/s</p><p><vs-icon class="down" name="dnarr" style="--s:8px"></vs-icon><b>0</b>K/s</p></div>
  <div class="disc">39<small>%</small><svg viewBox="0 0 58 58"><defs><linearGradient id="g" x1="0" y1="0" x2="0" y2="1"><stop stop-color="#2bc4b4"/><stop offset="1" stop-color="#7fc35a"/></linearGradient></defs><path d="M29 3.500a25.500 25.500 0 0 1 16.500 45" fill="none" stroke="url(#g)" stroke-width="2"/></svg></div>`);

/* Floating input method bar. */
define('ime-bar', `
  :host { position: fixed; right: 0; bottom: 74px; height: 26px; display: flex; align-items: center; gap: 10px; padding: 0 5px 0 37px; color: #0a6cd8; background: linear-gradient(#fff, #fff) 20px 0 no-repeat; font: 700 14px/26px "Noto Sans CJK SC", sans-serif; }
  .logo { position: absolute; left: 0; bottom: 0; display: flex; }
`, `<span class="logo">${ic('sogou', 31)}</span><span>中</span>${ic('punct', 14)}${ic('bmic', 15)}${ic('kbd', 15)}${ic('apps', 14)}`);

define('studio-app', `
  :host { display: flex; flex-direction: column; height: 100vh; }
  main { flex: 1; min-height: 0; display: grid; grid-template: "p l" 1fr "t t" 1fr / minmax(0, 670fr) minmax(0, 1247fr); gap: 3px; margin-top: 3px; }
  preview-panel { grid-area: p; } library-panel { grid-area: l; } timeline-panel { grid-area: t; }
`, '<title-bar></title-bar><main><preview-panel></preview-panel><library-panel></library-panel><timeline-panel></timeline-panel></main><task-bar></task-bar><speed-meter></speed-meter><ime-bar></ime-bar>');
</script>
</body>
</html>
